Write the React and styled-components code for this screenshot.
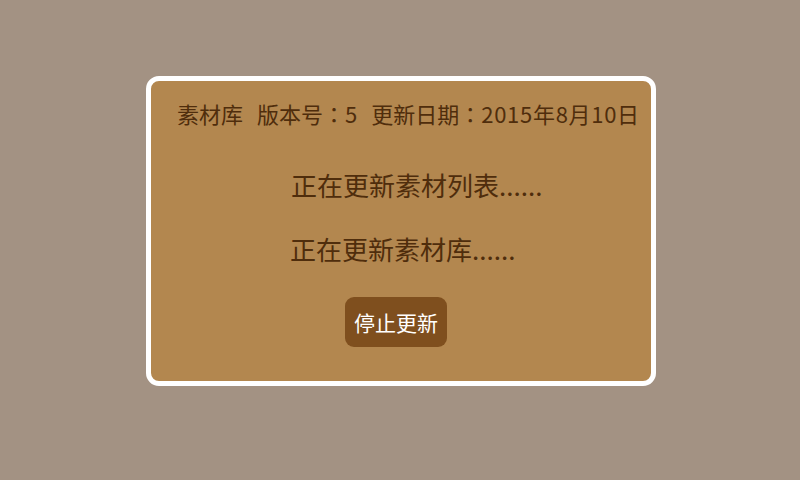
import React from "react";
import styled, { createGlobalStyle } from "styled-components";

const Global = createGlobalStyle`
  html, body { margin: 0; padding: 0; background: #a39283; }
  body { font-family: "Noto Sans CJK SC", "Noto Sans", sans-serif; }
`;

const Page = styled.div`
  width: 800px;
  height: 480px;
  box-sizing: border-box;
  padding-top: 76px;
  padding-left: 146px;
  background: #a39283;
`;

const Card = styled.div`
  width: 510px;
  height: 310px;
  box-sizing: border-box;
  border: 5px solid #ffffff;
  border-radius: 13px;
  background: #b3874f;
  display: flex;
  flex-direction: column;
  padding: 17px 0 0 26px;
  color: #4f2d0c;
`;

const Header = styled.div`
  display: flex;
  gap: 14px;
  font-size: 22px;
  line-height: 30px;
  white-space: nowrap;
`;

const Colon = styled.span`
  font-family: "Noto Sans CJK TC", "Noto Sans CJK SC", sans-serif;
`;

const Value = styled.span`
  letter-spacing: ${(p) => p.$spacing || 0}px;
`;

const Status = styled.div`
  font-size: 26px;
  line-height: 34px;
  margin-left: ${(p) => p.$indent}px;
  margin-top: ${(p) => p.$top}px;
  white-space: nowrap;
`;

const StopButton = styled.button`
  align-self: flex-start;
  margin-left: 168px;
  margin-top: 31px;
  width: 102px;
  height: 50px;
  border: none;
  border-radius: 9px;
  background: #7f4f1e;
  color: #ffffff;
  font-family: "Noto Sans CJK SC", "Noto Sans", sans-serif;
  font-size: 21px;
  padding: 0;
  cursor: pointer;
`;

export default function App() {
  return (
    <>
      <Global />
      <Page>
        <Card>
          <Header>
            <span>素材库</span>
            <span>
              版本号<Colon>：</Colon>5
            </span>
            <span>
              更新日期<Colon>：</Colon>
              <Value $spacing={0.7}>2015年8月10日</Value>
            </span>
          </Header>
          <Status $indent={114} $top={40}>正在更新素材列表......</Status>
          <Status $indent={113} $top={30}>正在更新素材库......</Status>
          <StopButton>停止更新</StopButton>
        </Card>
      </Page>
    </>
  );
}
